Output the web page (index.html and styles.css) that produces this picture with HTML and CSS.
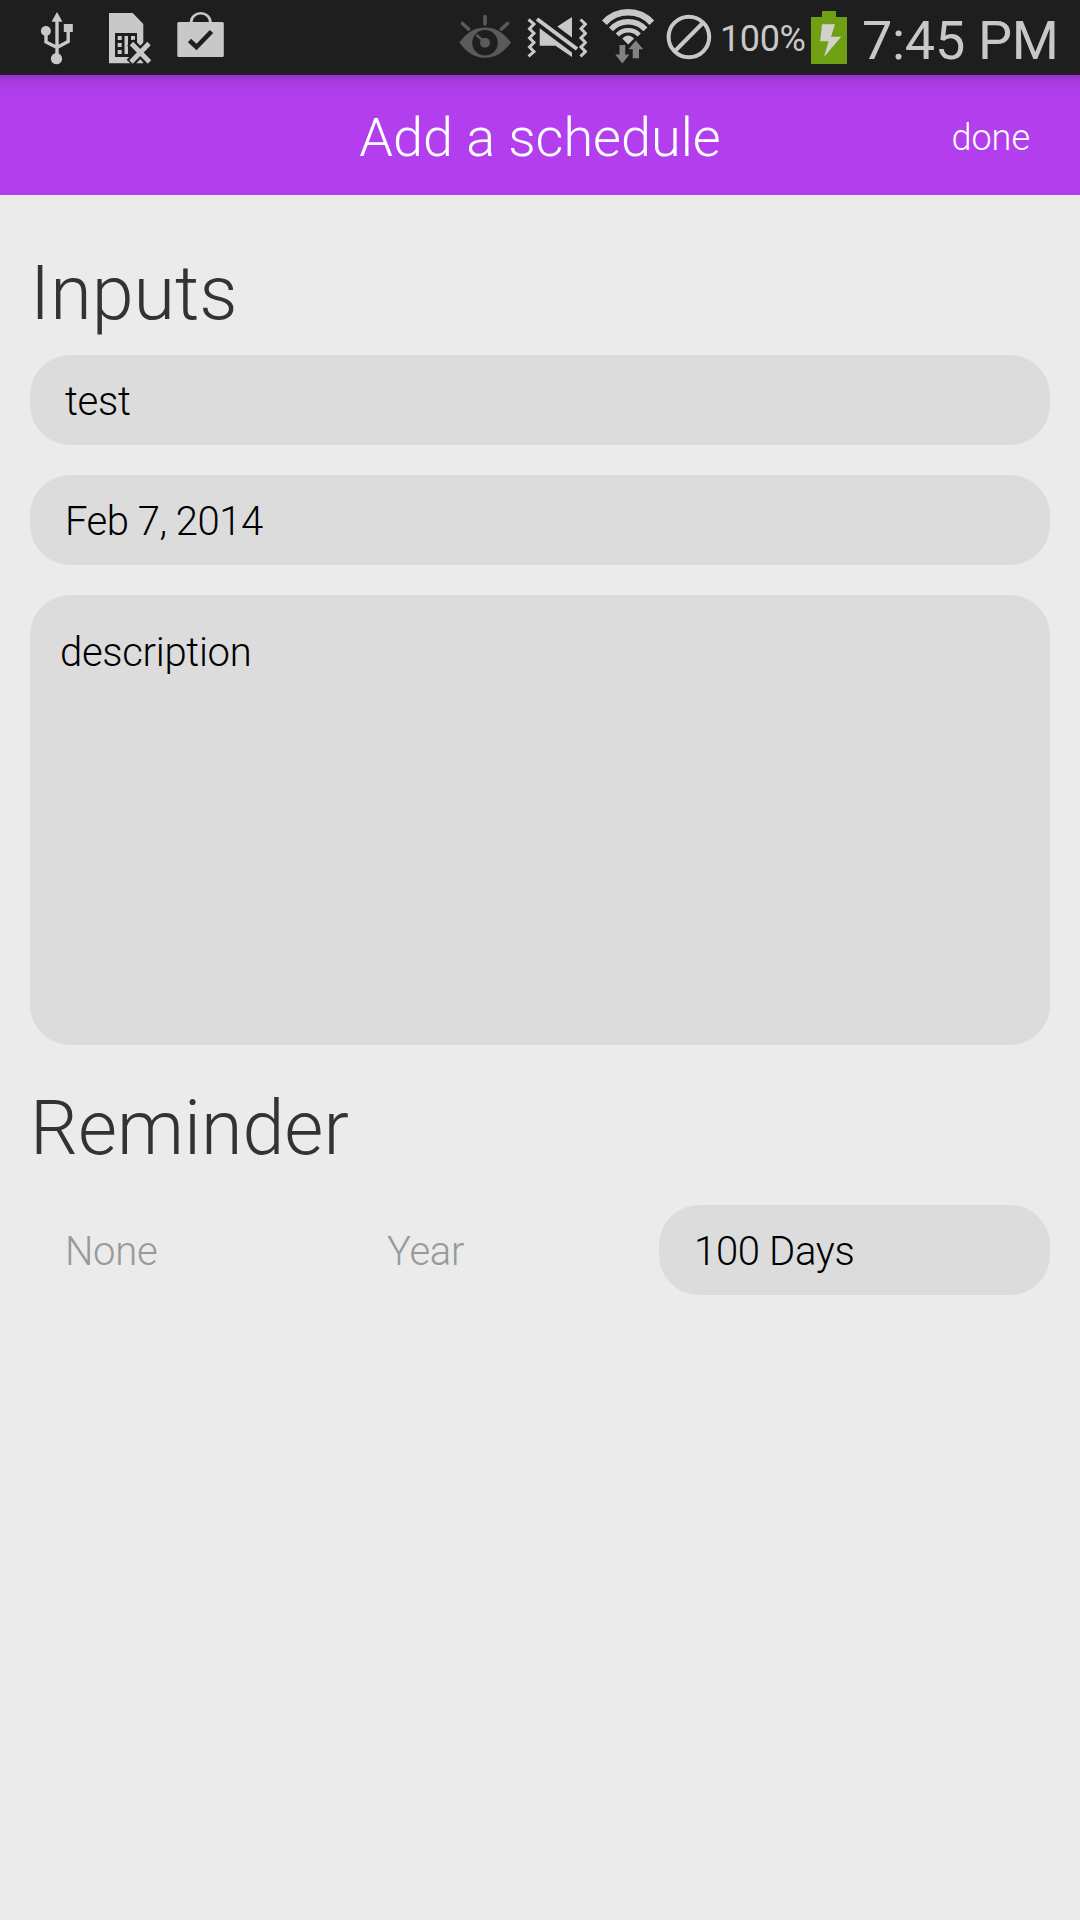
FILE: index.html
```html
<!DOCTYPE html>
<html lang="en">
<head>
    <meta charset="UTF-8">
    <meta name="viewport" content="width=device-width, initial-scale=1.0">
    <title>Add a schedule</title>

    <link rel="stylesheet" href="styles.css">

</head>
<body>

    <div class="status-bar">
        <div class="status-left">
            <!-- usb -->
            <svg class="usb" width="34" height="73" viewBox="40 0 34 73">
                <path class="fill" d="M57 12l5.5 9.7h-11z"/>
                <path class="line" stroke-width="3.4" d="M57 20v36M46 31v11l11 5.5M68.200 30v11.500l-11.200 6"/>
                <circle class="fill" cx="56.500" cy="58.700" r="5.600"/>
                <circle class="fill" cx="45.900" cy="31" r="5"/>
                <path class="fill" d="M63.800 24h9v8h-9z"/>
            </svg>
            <!-- no sim card -->
            <svg class="sim" width="44" height="73" viewBox="108 0 44 73">
                <path class="fill" d="M109 13h23.700l10.600 11v39.300H109z"/>
                <path class="dark" d="M115 33h22v24h-22z"/>
                <path class="fill" d="M117.700 36h4v4h-4zM117.700 43h4v4h-4zM117.700 50h4v4h-4zM124.500 36h3.500v18h-3.500zM131 36h4v4h-4zM131 43h4v4h-4z"/>
                <path class="dark-line" stroke-width="9.500" d="M130.500 42.500l20 20.500M150 42.500l-20 20.500"/>
                <path class="line" stroke-width="4.800" d="M131.500 43.500l18 18.500M149 43.500l-18 18.500"/>
            </svg>
            <!-- store bag -->
            <svg class="bag" width="48" height="73" viewBox="177 0 48 73">
                <path class="line" stroke-width="2.600" d="M191 23c0-13 19.500-13 19.500 0"/>
                <rect class="fill" x="177.300" y="22" width="46.500" height="35" rx="1.500"/>
                <path class="dark-line" stroke-width="4.600" d="M189.500 40.500l7 6.500 15-15.500"/>
            </svg>
        </div>
        <div class="status-right">
            <!-- smart stay -->
            <svg class="eye" width="54" height="73" viewBox="458 0 54 73">
                <path class="dim" d="M459.300 42.500c9-12 17-15 25.700-15s17 3 26 15c-9 12-17 15.300-26 15.300s-16.700-3.300-25.700-15.300z"/>
                <circle class="dark" cx="485" cy="42.700" r="12.800"/>
                <circle class="dim" cx="485" cy="42.700" r="5"/>
                <path class="dim-line" d="M477 35.500l6 5"/>
                <path class="dim-line ray" d="M485 16.500v7.500M462.500 23.500l6 5.500M507.500 23.500l-6 5.500"/>
            </svg>
            <!-- vibrate / mute -->
            <svg class="mute" width="60" height="73" viewBox="527 0 60 73">
                <path class="line" stroke-width="3" d="M528.500 19.500l5.500 4.600-4.500 4.600 4.500 4.600-4.500 4.600 4.500 4.600-4.500 4.600 4.500 4.600-5.500 4.600M580.500 19.500l5 4.600-4.500 4.600 4.500 4.600-4.500 4.600 4.500 4.600-4.500 4.600 4.500 4.600-5 4.600"/>
                <path class="line" stroke-width="4" d="M537 19l40 30"/>
                <path class="fill" d="M557.300 26.500L572 17v20.500zM539.700 28.300L572 52.500V57l-16.500-11.300h-15.800z"/>
            </svg>
            <!-- wifi -->
            <svg class="wifi" width="54" height="73" viewBox="601 0 54 73">
                <path class="line" stroke-width="6.500" d="M604.400 22.700a32 32 0 0 1 47.400 0"/>
                <path class="line" stroke-width="5.500" d="M611 29.300a23.500 23.500 0 0 1 34.400 0"/>
                <path class="line" stroke-width="4.600" d="M617.400 35a15 15 0 0 1 21.800 0"/>
                <path class="fill" d="M622.200 38.500q6-6 12 0l-6 6z"/>
                <path class="arrow" d="M619.500 45h5.700v9.500h4.200L622.300 63.500l-7-9h4.200z"/>
                <path class="arrow" d="M632.700 58.300v-9h-4.200l7.300-8.800 7.400 8.800H639v9z"/>
            </svg>
            <!-- no signal -->
            <svg class="blocked" width="46" height="73" viewBox="665.500 0 46 73">
                <circle class="line" stroke-width="4" cx="688.400" cy="37" r="20.300"/>
                <path class="line" stroke-width="4" d="M674.500 51l27.800-28"/>
            </svg>
            <span class="percent">100%</span>
            <!-- battery -->
            <svg class="battery" width="36" height="73" viewBox="811 0 36 73">
                <path class="charge" d="M811 17h11v-6h14v6h11v47h-36z"/>
                <path class="bolt" d="M822 24.300h13l-4 12.400h10.200L824 57l4.500-15.700h-8.300z"/>
            </svg>
            <span class="clock">7:45 PM</span>
        </div>
    </div>

    <div class="header">
        <h1>Add a schedule</h1>
        <button type="button" class="done">done</button>
    </div>

    <form class="schedule-form">
        <h2>Inputs</h2>
        <input type="text" class="field" value="test">
        <input type="text" class="field date" value="Feb 7, 2014">
        <textarea class="field description">description</textarea>

        <h2 class="reminder-title">Reminder</h2>
        <div class="reminder">
            <button type="button" class="option">None</button>
            <button type="button" class="option">Year</button>
            <button type="button" class="option selected">100 Days</button>
        </div>
    </form>

</body>
</html>
```
FILE: styles.css
```css
* {
    box-sizing: border-box;
}
body {
    margin: 0;
    min-height: 1920px;
    background: #ebebeb;
    font-family: Roboto, "Noto Sans", sans-serif;
    font-weight: 300;
}
button, input, textarea {
    font-family: inherit;
    font-weight: 300;
    border: 0;
    background: none;
    outline: none;
}

/* status bar */
.status-bar {
    display: flex;
    justify-content: space-between;
    height: 75px;
    padding: 0 22px 0 40px;
    background: #1e1e1e;
    border-bottom: 2px solid #2d153c;
    color: #c8c8c8;
    font-weight: 400;
}
.status-bar svg {
    display: block;
    flex: none;
}
.status-left,
.status-right {
    display: flex;
}
.sim {
    margin-left: 34px;
}
.bag {
    margin-left: 25px;
}
.mute {
    margin-left: 15px;
}
.wifi {
    margin-left: 14px;
}
.blocked {
    margin-left: 11.5px;
}
.percent {
    width: 91px;
    margin-left: 8px;
    font-size: 36px;
    letter-spacing: -0.4px;
    line-height: 79px;
    white-space: nowrap;
}
.clock {
    width: 196px;
    margin-left: 15px;
    font-size: 54px;
    letter-spacing: -0.3px;
    line-height: 81px;
    white-space: nowrap;
}
.fill {
    fill: #c8c8c8;
}
.line {
    fill: none;
    stroke: #c8c8c8;
}
.dark {
    fill: #1e1e1e;
}
.dark-line {
    fill: none;
    stroke: #1e1e1e;
}
.dim {
    fill: #5a5a5a;
}
.dim-line {
    fill: none;
    stroke: #5a5a5a;
    stroke-width: 2.5;
    stroke-linecap: round;
}
.ray {
    stroke-width: 3.6;
}
.arrow {
    fill: #828282;
}
.charge {
    fill: #6fa014;
}
.bolt {
    fill: #d2d2cd;
}

/* header */
.header {
    display: grid;
    grid-template-columns: 1fr auto 1fr;
    height: 120px;
    background: linear-gradient(#9334c2, #a83adf 7px, #b03dea 16px, #b23eee 26px);
    color: #fff;
}
.header h1 {
    grid-column: 2;
    margin: 0;
    font-size: 54px;
    font-weight: 300;
    line-height: 125px;
}
.done {
    justify-self: end;
    padding: 0 50px 0 0;
    color: #fff;
    font-size: 36px;
    line-height: 124px;
}

/* form */
.schedule-form {
    padding: 50px 30px 0;
}
.schedule-form h2 {
    margin: 0;
    color: #333;
    font-size: 75.5px;
    font-weight: 300;
    line-height: 97px;
    height: 110px;
}
.field {
    display: block;
    width: 100%;
    height: 90px;
    margin-bottom: 30px;
    padding: 2px 35px 0;
    border-radius: 40px;
    background: #dcdcdc;
    color: #000;
    font-size: 40px;
    letter-spacing: -0.3px;
}
.date {
    letter-spacing: -0.5px;
}
.description {
    height: 450px;
    padding: 34px 30px;
    resize: none;
}
.schedule-form .reminder-title {
    height: 130px;
    line-height: 107px;
}
.reminder {
    display: grid;
    grid-template-columns: 292px 277px 391px;
    gap: 30px;
}
.option {
    height: 90px;
    padding: 2px 35px 0;
    border-radius: 40px;
    color: #999;
    font-size: 40px;
    letter-spacing: -0.3px;
    text-align: left;
}
.selected {
    background: #dcdcdc;
    color: #000;
}
```
